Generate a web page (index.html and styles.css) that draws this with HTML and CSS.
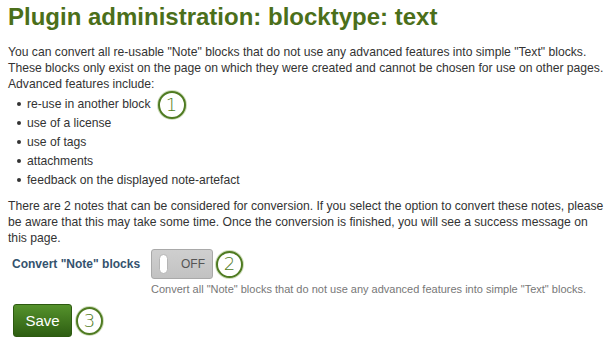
FILE: index.html
```html
<!DOCTYPE html>
<html>
<head>
<meta charset="utf-8">
<link rel="stylesheet" href="styles.css">
</head>
<body>
<h1 class="title">Plugin administration: blocktype: text</h1>
<p class="text">You can convert all re-usable "Note" blocks that do not use any advanced features into simple "Text" blocks. These blocks only exist on the page on which they were created and cannot be chosen for use on other pages. Advanced features include:</p>
<ul class="features">
  <li>re-use in another block<span class="callout callout-1">1</span></li>
  <li>use of a license</li>
  <li>use of tags</li>
  <li>attachments</li>
  <li>feedback on the displayed note-artefact</li>
</ul>
<p class="text text-2">There are 2 notes that can be considered for conversion. If you select the option to convert these notes, please be aware that this may take some time. Once the conversion is finished, you will see a success message on this page.</p>
<div class="form-row">
  <label class="label">Convert "Note" blocks</label>
  <div class="control">
    <span class="toggle"><span class="knob"></span><span class="toggle-text">OFF</span></span>
    <span class="callout callout-2">2</span>
  </div>
  <div class="description">Convert all "Note" blocks that do not use any advanced features into simple "Text" blocks.</div>
</div>
<div class="actions">
  <button class="save">Save</button>
  <span class="callout callout-3">3</span>
</div>
</body>
</html>
```
FILE: styles.css
```css
html, body {
  margin: 0;
  padding: 0;
  background: #fff;
}
body {
  padding: 0 8px;
  font-family: "Liberation Sans", Arial, sans-serif;
  color: #333;
}
.title {
  margin: 2px 0 0;
  font-size: 24px;
  line-height: 30px;
  font-weight: bold;
  color: #4b6f1a;
}
.text {
  margin: 12px 0 0;
  font-size: 12.15px;
  line-height: 16px;
}
.text-2 {
  margin-top: 8px;
}
.features {
  margin: 3px 0 0;
  padding-left: 19px;
  list-style: none;
  font-size: 12.15px;
  line-height: 19px;
}
.features li::before {
  content: "";
  display: inline-block;
  width: 4px;
  height: 4px;
  border-radius: 50%;
  background: #333;
  margin-left: -10px;
  margin-right: 6px;
  vertical-align: 2px;
}
.callout {
  display: inline-flex;
  align-items: center;
  justify-content: center;
  box-sizing: border-box;
  width: 28px;
  height: 28px;
  border: 2px solid #4f7b22;
  border-radius: 50%;
  background: #fff;
  color: #4f7b22;
  font-family: "DejaVu Sans", sans-serif;
  font-size: 18px;
  font-weight: 300;
  line-height: 1;
  box-shadow: 0 0 0 1px rgba(120, 160, 70, 0.35);
}
.callout-1 {
  vertical-align: middle;
  margin: -6px 0 -6px 7px;
}
.form-row {
  margin-top: 3px;
  display: grid;
  grid-template-columns: 143px 1fr;
  align-items: center;
}
.label {
  padding-left: 4px;
  font-size: 12px;
  font-weight: bold;
  color: #34526e;
}
.control {
  display: flex;
  align-items: center;
  gap: 3px;
}
.toggle {
  display: flex;
  align-items: center;
  box-sizing: border-box;
  width: 62px;
  height: 30px;
  border: 1px solid #a9a9a9;
  border-radius: 3px;
  background: linear-gradient(#cfcfcf, #c2c2c2);
}
.knob {
  box-sizing: border-box;
  width: 9px;
  height: 20px;
  margin-left: 7px;
  border: 1px solid #b5b5b5;
  border-radius: 5px;
  background: #fff;
}
.toggle-text {
  margin-left: 13px;
  font-size: 12px;
  color: #555;
}
.callout-2 {
  width: 27px;
  height: 27px;
}
.description {
  grid-column: 2;
  margin-top: 3px;
  font-size: 11px;
  line-height: 14px;
  color: #777;
}
.actions {
  margin-top: 8px;
  display: flex;
  align-items: center;
  gap: 4px;
  padding-left: 5px;
}
.save {
  box-sizing: border-box;
  width: 59px;
  height: 33px;
  border: 1px solid #2d5a10;
  border-radius: 3px;
  background: linear-gradient(#55922c, #2e5e12);
  color: #fff;
  font-family: "Liberation Sans", Arial, sans-serif;
  font-size: 15px;
  padding: 0;
}
.callout-3 {
  width: 27px;
  height: 28px;
}
```
